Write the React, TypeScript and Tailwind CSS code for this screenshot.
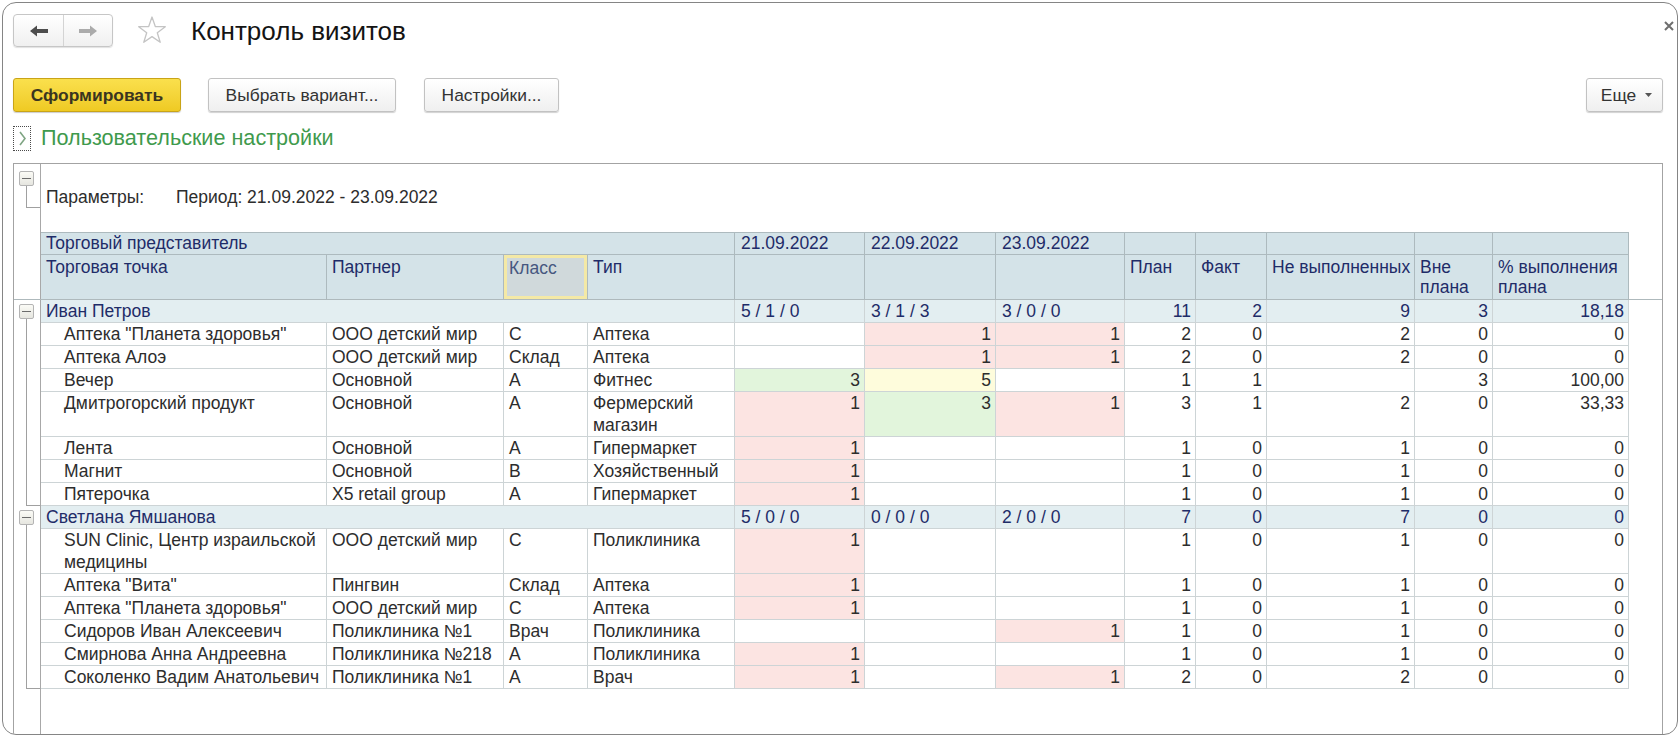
import React from "react";

type Tone = "" | "p" | "g" | "y";
type DCell = [string, Tone];

interface Row {
  n: string;
  pa: string;
  c: string;
  t: string;
  d: DCell[];
  v: string[];
  tall?: boolean;
}
interface Group {
  name: string;
  d: string[];
  v: string[];
  rows: Row[];
  h: string;
}

const E: DCell = ["", ""];
const P: DCell = ["1", "p"];

const groups: Group[] = [
  {
    name: "Иван Петров",
    d: ["5 / 1 / 0", "3 / 1 / 3", "3 / 0 / 0"],
    v: ["11", "2", "9", "3", "18,18"],
    h: "h-[206px]",
    rows: [
      { n: 'Аптека "Планета здоровья"', pa: "ООО детский мир", c: "С", t: "Аптека", d: [E, P, P], v: ["2", "0", "2", "0", "0"] },
      { n: "Аптека Алоэ", pa: "ООО детский мир", c: "Склад", t: "Аптека", d: [E, P, P], v: ["2", "0", "2", "0", "0"] },
      { n: "Вечер", pa: "Основной", c: "А", t: "Фитнес", d: [["3", "g"], ["5", "y"], E], v: ["1", "1", "", "3", "100,00"] },
      { n: "Дмитрогорский продукт", pa: "Основной", c: "А", t: "Фермерский магазин", d: [P, ["3", "g"], P], v: ["3", "1", "2", "0", "33,33"], tall: true },
      { n: "Лента", pa: "Основной", c: "А", t: "Гипермаркет", d: [P, E, E], v: ["1", "0", "1", "0", "0"] },
      { n: "Магнит", pa: "Основной", c: "В", t: "Хозяйственный", d: [P, E, E], v: ["1", "0", "1", "0", "0"] },
      { n: "Пятерочка", pa: "X5 retail group", c: "А", t: "Гипермаркет", d: [P, E, E], v: ["1", "0", "1", "0", "0"] },
    ],
  },
  {
    name: "Светлана Ямшанова",
    d: ["5 / 0 / 0", "0 / 0 / 0", "2 / 0 / 0"],
    v: ["7", "0", "7", "0", "0"],
    h: "h-[183px]",
    rows: [
      { n: "SUN Clinic, Центр израильской медицины", pa: "ООО детский мир", c: "С", t: "Поликлиника", d: [P, E, E], v: ["1", "0", "1", "0", "0"], tall: true },
      { n: 'Аптека "Вита"', pa: "Пингвин", c: "Склад", t: "Аптека", d: [P, E, E], v: ["1", "0", "1", "0", "0"] },
      { n: 'Аптека "Планета здоровья"', pa: "ООО детский мир", c: "С", t: "Аптека", d: [P, E, E], v: ["1", "0", "1", "0", "0"] },
      { n: "Сидоров Иван Алексеевич", pa: "Поликлиника №1", c: "Врач", t: "Поликлиника", d: [E, E, P], v: ["1", "0", "1", "0", "0"] },
      { n: "Смирнова Анна Андреевна", pa: "Поликлиника №218", c: "А", t: "Поликлиника", d: [P, E, E], v: ["1", "0", "1", "0", "0"] },
      { n: "Соколенко Вадим Анатольевич", pa: "Поликлиника №1", c: "А", t: "Врач", d: [P, E, P], v: ["2", "0", "2", "0", "0"] },
    ],
  },
];

const toneBg: Record<Tone, string> = {
  "": "",
  p: "bg-[#fce4e2]",
  g: "bg-[#e2f5dc]",
  y: "bg-[#fefcdc]",
};

const COLS =
  "grid grid-cols-[286px_177px_84px_147px_130px_131px_129px_71px_71px_148px_78px_136px] w-[1588px]";

function MinusBox() {
  return (
    <div className="w-[15px] h-[15px] ml-[5px] shrink-0 rounded-[2px] border border-[#b4b4b4] bg-gradient-to-b from-[#fbfbf6] to-[#e6e6e0] flex items-center justify-center">
      <div className="w-[9px] h-[1.5px] bg-[#6b6b6b]" />
    </div>
  );
}

function Btn({ children, w, primary }: { children: React.ReactNode; w: string; primary?: boolean }) {
  return (
    <div
      className={
        primary
          ? `${w} h-[34px] rounded-[3px] border border-[#c9a417] bg-gradient-to-b from-[#fae04c] to-[#efca22] shadow-[0_1px_1px_rgba(0,0,0,0.2)] flex items-center justify-center text-[17.4px] font-bold text-[#3a3520]`
          : `${w} h-[34px] rounded-[3px] border border-[#c2c2c2] bg-gradient-to-b from-white to-[#efefef] shadow-[0_1px_1px_rgba(0,0,0,0.18)] flex items-center justify-center text-[17.4px] text-[#333]`
      }
    >
      {children}
    </div>
  );
}

const HB = "border-r border-[#adbabe]";
const HT = "text-[#1f2c68] text-[17.5px] leading-[20px] pl-[5px] pt-[2px]";
const BB = "border-r border-b border-[#cdd4d6]";

function BodyRow({ r }: { r: Row }) {
  const h = r.tall ? "h-[45px]" : "h-[23px]";
  const wrap = r.tall ? "" : "whitespace-nowrap overflow-hidden";
  return (
    <div className={`${COLS} ${h} text-[17.5px] leading-[22px] text-[#2d2d2d]`}>
      <div className={`${BB} ${wrap} pl-[23px] pr-[2px]`}>{r.n}</div>
      <div className={`${BB} ${wrap} pl-[5px]`}>{r.pa}</div>
      <div className={`${BB} ${wrap} pl-[5px]`}>{r.c}</div>
      <div className={`${BB} ${wrap} pl-[5px] pr-[2px]`}>{r.t}</div>
      {r.d.map((c, i) => (
        <div key={i} className={`${BB} ${toneBg[c[1]]} text-right pr-[4px]`}>
          {c[0]}
        </div>
      ))}
      {r.v.map((x, i) => (
        <div key={i} className={`${BB} text-right pr-[4px]`}>
          {x}
        </div>
      ))}
    </div>
  );
}

function GroupRow({ g }: { g: Group }) {
  return (
    <div className={`${COLS} h-[23px] bg-[#e3eef1] text-[17.5px] leading-[22px] text-[#1f2c68]`}>
      <div className={`${BB} col-span-4 pl-[5px] whitespace-nowrap`}>{g.name}</div>
      {g.d.map((x, i) => (
        <div key={i} className={`${BB} pl-[6px] whitespace-nowrap`}>
          {x}
        </div>
      ))}
      {g.v.map((x, i) => (
        <div key={i} className={`${BB} text-right pr-[4px]`}>
          {x}
        </div>
      ))}
    </div>
  );
}

export default function App() {
  return (
    <div className="w-[1680px] h-[736px] bg-white pt-[2px] pl-[2px] font-['Liberation_Sans',Arial,sans-serif] overflow-hidden">
      <div className="w-[1676px] h-[733px] rounded-[14px] border border-[#858585] flex flex-col overflow-hidden bg-white">
        {/* Top bar */}
        <div className="mt-[11px] h-[33px] pl-[10px] flex items-center shrink-0">
          <div className="w-[100px] h-[33px] rounded-[4px] border border-[#c6c6c6] bg-gradient-to-b from-white to-[#f0f0f0] shadow-[0_1px_1px_rgba(0,0,0,0.12)] flex">
            <div className="w-[50px] h-full flex items-center justify-center border-r border-[#d4d4d4]">
              <svg width="18" height="12" viewBox="0 0 18 12">
                <path d="M0 6 L7 0.5 L7 4 L18 4 L18 8 L7 8 L7 11.5 Z" fill="#4d4d4d" />
              </svg>
            </div>
            <div className="flex-1 h-full flex items-center justify-center">
              <svg width="18" height="12" viewBox="0 0 18 12">
                <path d="M18 6 L11 0.5 L11 4 L0 4 L0 8 L11 8 L11 11.5 Z" fill="#ababab" />
              </svg>
            </div>
          </div>
          <div className="ml-[24px] w-[30px] h-[30px]">
            <svg width="30" height="30" viewBox="0 0 30 30">
              <polygon
                points="15,1 18.3,10.5 28.3,10.7 20.3,16.7 23.2,26.3 15,20.6 6.8,26.3 9.7,16.7 1.7,10.7 11.7,10.5"
                fill="white"
                stroke="#c4c4c4"
                strokeWidth="1.3"
                strokeLinejoin="round"
              />
            </svg>
          </div>
          <div className="ml-[24px] text-[26px] leading-[30px] text-[#141414]">Контроль визитов</div>
          <div className="ml-auto mr-[3px] self-start mt-[7px] w-[10px] h-[10px]">
            <svg width="10" height="10" viewBox="0 0 10 10">
              <path d="M1 1 L9 9 M9 1 L1 9" stroke="#6e6e6e" strokeWidth="2" />
            </svg>
          </div>
        </div>

        {/* Buttons */}
        <div className="mt-[31px] h-[34px] pl-[10px] pr-[14px] flex shrink-0">
          <Btn w="w-[168px]" primary>
            Сформировать
          </Btn>
          <div className="ml-[27px]">
            <Btn w="w-[188px]">Выбрать вариант...</Btn>
          </div>
          <div className="ml-[28px]">
            <Btn w="w-[135px]">Настройки...</Btn>
          </div>
          <div className="ml-auto">
            <Btn w="w-[77px]">
              <span className="ml-[4px]">Еще</span>
              <svg className="ml-[9px]" width="7" height="4" viewBox="0 0 7 4">
                <path d="M0 0 L7 0 L3.5 4 Z" fill="#555" />
              </svg>
            </Btn>
          </div>
        </div>

        {/* User settings link */}
        <div className="mt-[14px] h-[25px] pl-[10px] flex items-center shrink-0">
          <div className="w-[18px] h-[25px] border border-dotted border-[#4a4a4a] flex items-center justify-center">
            <svg width="7" height="15" viewBox="0 0 7 15">
              <path d="M1 1 L6 7.5 L1 14" stroke="#7fa583" strokeWidth="1.6" fill="none" />
            </svg>
          </div>
          <div className="ml-[10px] mb-[3px] text-[21.6px] leading-[25px] text-[#3f9a4d]">Пользовательские настройки</div>
        </div>

        {/* Report frame */}
        <div className="mt-[12px] ml-[10px] mr-[14px] flex-1 border-l border-t border-r border-[#a3a3a3] flex flex-col min-h-0">
          {/* Header section */}
          <div className="flex border-b border-[#aeb9bc] shrink-0">
            <div className="w-[27px] border-r border-[#a8a8a8] flex flex-col pt-[7px]">
              <MinusBox />
              <div className="ml-[12px] w-[14px] h-[22px] border-l border-b border-[#a0a0a0]" />
            </div>
            <div className="flex flex-col">
              <div className="h-[68px] pt-[22px] pl-[5px] flex text-[17.5px] leading-[22px] text-[#2d2d2d]">
                <span className="w-[130px]">Параметры:</span>
                <span>Период: 21.09.2022 - 23.09.2022</span>
              </div>
              <div className="w-[1588px] border-t border-[#adbabe] bg-[#d4e3e8]">
                <div className={`${COLS} h-[22px] border-b border-[#adbabe] text-[17.5px] leading-[21px] text-[#1f2c68]`}>
                  <div className={`${HB} col-span-4 pl-[5px]`}>Торговый представитель</div>
                  <div className={`${HB} pl-[6px]`}>21.09.2022</div>
                  <div className={`${HB} pl-[6px]`}>22.09.2022</div>
                  <div className={`${HB} pl-[6px]`}>23.09.2022</div>
                  <div className={HB} />
                  <div className={HB} />
                  <div className={HB} />
                  <div className={HB} />
                  <div className={HB} />
                </div>
                <div className={`${COLS} h-[44px]`}>
                  <div className={`${HB} ${HT}`}>Торговая точка</div>
                  <div className={`${HB} ${HT}`}>Партнер</div>
                  <div className={HB}>
                    <div className="h-full border-[3px] border-[#f4e9a6] bg-[#d0d9db] pl-[2px] text-[17.5px] leading-[20px] text-[#46577f]">
                      Класс
                    </div>
                  </div>
                  <div className={`${HB} ${HT}`}>Тип</div>
                  <div className={HB} />
                  <div className={HB} />
                  <div className={HB} />
                  <div className={`${HB} ${HT}`}>План</div>
                  <div className={`${HB} ${HT}`}>Факт</div>
                  <div className={`${HB} ${HT} whitespace-nowrap`}>Не выполненных</div>
                  <div className={`${HB} ${HT}`}>Вне плана</div>
                  <div className={`${HB} ${HT}`}>% выполнения плана</div>
                </div>
              </div>
            </div>
          </div>

          {/* Body section */}
          <div className="flex flex-1 min-h-0">
            <div className="w-[27px] border-r border-[#a8a8a8] flex flex-col shrink-0">
              {groups.map((g, i) => (
                <div key={i} className={`${g.h} flex flex-col pt-[4px]`}>
                  <MinusBox />
                  <div className="ml-[12px] w-[14px] flex-1 border-l border-b border-[#a0a0a0]" />
                </div>
              ))}
            </div>
            <div className="flex flex-col">
              {groups.map((g, i) => (
                <React.Fragment key={i}>
                  <GroupRow g={g} />
                  {g.rows.map((r, j) => (
                    <BodyRow key={j} r={r} />
                  ))}
                </React.Fragment>
              ))}
            </div>
          </div>
        </div>
      </div>
    </div>
  );
}
